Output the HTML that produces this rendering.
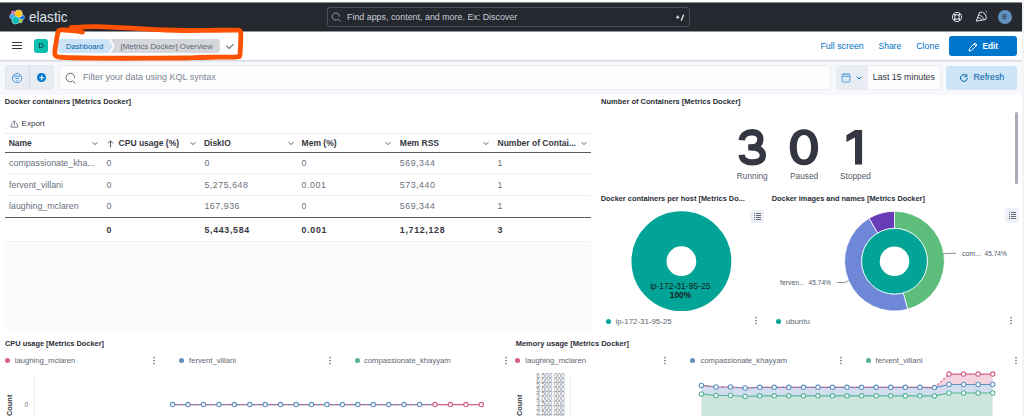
<!DOCTYPE html>
<html><head><meta charset="utf-8">
<style>
*{box-sizing:border-box;margin:0;padding:0}
html,body{width:1024px;height:416px;overflow:hidden;background:#fff;font-family:"Liberation Sans",sans-serif;color:#343741}
.a{position:absolute}
.t{position:absolute;white-space:nowrap;line-height:1}
.b{font-weight:700}
#hdr{left:0;top:3px;width:1022px;height:28px;background:#25282f;box-shadow:0 -1px 0 rgba(37,40,47,.55),0 1px 0 rgba(37,40,47,.5)}
#rstrip{left:1022px;top:0;width:2px;height:416px;background:#f3f3f3}
#bar2{left:0;top:31px;width:1022px;height:30px;background:#fff;border-bottom:1px solid #d3dae6}
#fbar{left:0;top:61px;width:1022px;height:34px;background:#f7f8fc;box-shadow:inset 0 2px 2px -1px rgba(0,0,0,.07)}
</style></head>
<body>
<div id="rstrip" class="a"></div>
<!-- dark header -->
<div id="bar2" class="a"></div>
<div id="hdr" class="a"></div>
<svg class="a" style="left:0;top:0" width="32" height="32" viewBox="0 0 32 32">
  <g stroke="#e8ebf0" stroke-width=".55">
  <circle cx="12.1" cy="16.5" r="2.4" fill="#1ba9f5"/>
  <circle cx="13.1" cy="12.6" r="1.7" fill="#f04e98"/>
  <circle cx="21.9" cy="17.3" r="2.5" fill="#0b64dd"/>
  <circle cx="18.6" cy="13.7" r="3.8" fill="#fec514"/>
  <circle cx="20.6" cy="21" r="1.8" fill="#93c90e"/>
  <circle cx="15.6" cy="20.2" r="3.8" fill="#00bfb3"/>
  </g>
</svg>
<div class="t" style="left:29.3px;top:9.4px;font-size:15px;color:#dfe5ef;transform:scaleX(.905);transform-origin:0 0">elastic</div>
<div class="a" style="left:327px;top:7px;width:363px;height:20px;border:1px solid #4b505b;border-radius:3px;background:#25282f"></div>
<svg class="a" style="left:331px;top:11.5px" width="11" height="11" viewBox="0 0 11 11"><path d="M6.6 7.6A3.6 3.6 0 1 1 8.4 4.6" fill="none" stroke="#a2abba" stroke-width=".9"/><path d="M6.9 6.9L9.3 9.4" stroke="#a2abba" stroke-width=".9"/></svg>
<div class="t" style="left:347px;top:12.5px;font-size:8.9px;color:#c9ced6">Find apps, content, and more. Ex: Discover</div>
<svg class="a" style="left:675px;top:14px" width="10" height="8" viewBox="0 0 10 8"><path d="M1.2 4L2.7 1.6L4.2 4Z" fill="#e8ebf0" stroke="#e8ebf0" stroke-width=".5"/><path d="M8.6 .8L6.2 6.8" stroke="#e8ebf0" stroke-width="1.3"/></svg>
<!-- header right icons -->
<svg class="a" style="left:951px;top:11px" width="12" height="12" viewBox="0 0 12 12"><circle cx="6" cy="6" r="4.6" fill="none" stroke="#dfe5ef" stroke-width="1"/><circle cx="6" cy="6" r="2.3" fill="none" stroke="#dfe5ef" stroke-width="1"/><path d="M2.8 2.8L4.4 4.4M9.2 2.8L7.6 4.4M2.8 9.2L4.4 7.6M9.2 9.2L7.6 7.6" stroke="#dfe5ef" stroke-width="1.6"/></svg>
<svg class="a" style="left:974px;top:9px" width="14" height="14" viewBox="0 0 14 14"><path d="M2.2 12.2L5.6 3.3A5.3 5.3 0 0 1 11.9 10.4Z" fill="none" stroke="#dfe5ef" stroke-width="1"/><path d="M3.6 8.6Q6.4 8.6 8.1 11.3M4.6 5.8Q8.6 6.4 10.2 10.8" fill="none" stroke="#dfe5ef" stroke-width=".9"/><path d="M11.6 1.6Q12.8 2.2 12.3 3.6" fill="none" stroke="#dfe5ef" stroke-width=".7"/></svg>
<div class="a" style="left:997.6px;top:9.5px;width:14.5px;height:14.5px;border-radius:50%;background:#6092c0"></div>
<div class="t" style="left:1002.2px;top:12.4px;font-size:8.6px;color:#25282f">e</div>

<!-- second bar -->
<div class="a" style="left:12px;top:41.8px;width:10px;height:1.1px;background:#343741"></div>
<div class="a" style="left:12px;top:45.1px;width:10px;height:1.1px;background:#343741"></div>
<div class="a" style="left:12px;top:48.3px;width:10px;height:1.1px;background:#343741"></div>
<div class="a" style="left:34px;top:38.5px;width:14px;height:14px;border-radius:3px;background:#0bbfae"></div>
<div class="t" style="left:38.6px;top:41.8px;font-size:7.6px;color:#1a1c21">D</div>
<svg class="a" style="left:58px;top:38.9px" width="164" height="14" viewBox="0 0 164 14">
  <path d="M3 0H50.5L55 7L50.5 14H3Q0 14 0 11V3Q0 0 3 0Z" fill="#cce4f5"/>
  <path d="M52.5 0H158.8Q161.8 0 161.8 3V11Q161.8 14 158.8 14H52.5L57 7Z" fill="#d5d7db"/>
</svg>
<div class="t" style="left:66px;top:42.7px;font-size:7.6px;color:#0061a6">Dashboard</div>
<div class="t" style="left:120.6px;top:42.6px;font-size:7.9px;color:#606673">[Metrics Docker] Overview</div>
<svg class="a" style="left:225px;top:42px" width="10" height="8" viewBox="0 0 10 8"><path d="M1.3 3.6L4.2 6.5L8.6 2.2" fill="none" stroke="#69707d" stroke-width="1.1"/></svg>
<div class="t" style="left:820.4px;top:41.6px;font-size:8.9px;color:#0071c2">Full screen</div>
<div class="t" style="left:878.5px;top:41.6px;font-size:8.5px;color:#0071c2">Share</div>
<div class="t" style="left:916.2px;top:41.6px;font-size:8.9px;color:#0071c2">Clone</div>
<div class="a" style="left:949px;top:36.2px;width:68px;height:19.5px;border-radius:3px;background:#0077cc"></div>
<svg class="a" style="left:968px;top:41.5px" width="10" height="10" viewBox="0 0 10 10"><path d="M1 9L1.6 6.4L7 1L9 3L3.6 8.4Z" fill="none" stroke="#fff" stroke-width="1"/><path d="M6 2L8 4" stroke="#fff" stroke-width="1"/></svg>
<div class="t b" style="left:982.4px;top:41.6px;font-size:8.3px;color:#fff">Edit</div>

<!-- filter bar -->
<div id="fbar" class="a"></div>

<div class="a" style="left:5px;top:65px;width:48.5px;height:25px;border-radius:3px;background:#e9edf3;border:1px solid #e3e8f2"></div>
<div class="a" style="left:29.3px;top:65.5px;width:1px;height:24px;background:#d3dae6"></div>
<svg class="a" style="left:11px;top:71.5px" width="12" height="12" viewBox="0 0 12 12"><circle cx="6.1" cy="6.1" r="4.6" fill="none" stroke="#2f87d3" stroke-width=".85"/><path d="M2.8 4.2H9.4M4.3 6.5H7.9M5.4 8.7H6.8" stroke="#2f87d3" stroke-width=".9"/></svg>
<div class="a" style="left:36.9px;top:73px;width:9.4px;height:9.4px;border-radius:50%;background:#0077cc"></div>
<svg class="a" style="left:36.9px;top:73px" width="9.4" height="9.4" viewBox="0 0 10 10"><path d="M5 2.4V7.6M2.4 5H7.6" stroke="#fff" stroke-width="1.2"/></svg>
<div class="a" style="left:58.7px;top:65.2px;width:772px;height:24.4px;border-radius:3px;background:#fdfdfe;border:1px solid #e9ecf2"></div>
<svg class="a" style="left:64px;top:71.7px" width="13" height="13" viewBox="0 0 13 13"><path d="M8.3 9.3A4.3 4.3 0 1 1 10.5 6.2" fill="none" stroke="#535966" stroke-width=".9"/><path d="M8.6 8.6L11.2 11.4" stroke="#535966" stroke-width=".9"/></svg>
<div class="t" style="left:83px;top:73px;font-size:9px;color:#7d8492">Filter your data using KQL syntax</div>
<div class="a" style="left:836.3px;top:65.3px;width:105px;height:24.3px;border-radius:3px;background:#fdfdfe;border:1px solid #e9ecf2"></div>
<div class="a" style="left:836.8px;top:65.8px;width:31px;height:23.3px;border-radius:3px 0 0 3px;background:#e9edf3"></div>
<svg class="a" style="left:841px;top:72px" width="10" height="11" viewBox="0 0 10 11"><rect x="1" y="2" width="8" height="8" rx="1" fill="#dbe7f3" stroke="#3d8fd6" stroke-width=".8"/><path d="M1 4.3H9M3 1V3M7 1V3" stroke="#3d8fd6" stroke-width=".8"/></svg>
<svg class="a" style="left:855.5px;top:75.5px" width="6" height="4" viewBox="0 0 6 4"><path d="M.7 .8L3 3L5.3 .8" fill="none" stroke="#0077cc" stroke-width="1"/></svg>
<div class="t" style="left:872.8px;top:72.8px;font-size:8.8px;color:#343741">Last 15 minutes</div>
<div class="a" style="left:946px;top:65.8px;width:71px;height:23.8px;border-radius:3px;background:#cce4f5"></div>
<svg class="a" style="left:958.5px;top:72.5px" width="10" height="10" viewBox="0 0 10 10"><path d="M8.3 5A3.4 3.4 0 1 1 6.9 2.2" fill="none" stroke="#0061a6" stroke-width="1"/><path d="M5.3 2.2H7.8V-.3" fill="none" stroke="#0061a6" stroke-width="1" transform="translate(0 1.5)"/></svg>
<div class="t" style="left:973.4px;top:73px;font-size:8.8px;color:#0061a6">Refresh</div>


<!-- table panel -->
<div class="a" style="left:5px;top:241px;width:585.5px;height:91px;background:#fafbfd"></div>
<div class="t b" style="left:4.8px;top:98px;font-size:7.5px;color:#2b2e36">Docker containers [Metrics Docker]</div>
<svg class="a" style="left:9.5px;top:119.5px" width="9" height="8" viewBox="0 0 9 8"><path d="M3 2.6Q1 3.9 1 5.6V7.1H7.6V5.6Q7.6 3.9 5.6 2.6" fill="none" stroke="#69707d" stroke-width=".9"/><path d="M4.3 5.6V.8M3.2 1.9L4.3 .8L5.4 1.9" fill="none" stroke="#69707d" stroke-width=".9"/></svg>
<div class="t" style="left:21.6px;top:119.6px;font-size:8px;color:#343741">Export</div>
<div class="a" style="left:5px;top:133px;width:585.5px;height:1px;background:#e9edf3"></div>
<div class="a" style="left:5px;top:151.6px;width:585.5px;height:1.6px;background:#535966"></div>
<div class="a" style="left:5px;top:173.2px;width:585.5px;height:1px;background:#eef1f6"></div>
<div class="a" style="left:5px;top:195.2px;width:585.5px;height:1px;background:#eef1f6"></div>
<div class="a" style="left:5px;top:216.8px;width:585.5px;height:1.6px;background:#535966"></div>
<div class="a" style="left:5px;top:240.6px;width:585.5px;height:1px;background:#eef1f6"></div>
<div class="t b" style="left:8.7px;top:139px;font-size:8.5px;color:#343741">Name</div>
<svg class="a" style="left:92.2px;top:140.5px" width="6" height="5" viewBox="0 0 6 5"><path d="M.6 1.2L3 3.6L5.4 1.2" fill="none" stroke="#454a55" stroke-width=".9"/></svg>
<div class="t b" style="left:118.6px;top:139px;font-size:8.5px;color:#343741">CPU usage (%)</div>
<svg class="a" style="left:190.3px;top:140.5px" width="6" height="5" viewBox="0 0 6 5"><path d="M.6 1.2L3 3.6L5.4 1.2" fill="none" stroke="#454a55" stroke-width=".9"/></svg>
<div class="t b" style="left:203.9px;top:139px;font-size:8.5px;color:#343741">DiskIO</div>
<svg class="a" style="left:287.6px;top:140.5px" width="6" height="5" viewBox="0 0 6 5"><path d="M.6 1.2L3 3.6L5.4 1.2" fill="none" stroke="#454a55" stroke-width=".9"/></svg>
<div class="t b" style="left:301.6px;top:139px;font-size:8.5px;color:#343741">Mem (%)</div>
<svg class="a" style="left:385.2px;top:140.5px" width="6" height="5" viewBox="0 0 6 5"><path d="M.6 1.2L3 3.6L5.4 1.2" fill="none" stroke="#454a55" stroke-width=".9"/></svg>
<div class="t b" style="left:399.8px;top:139px;font-size:8.5px;color:#343741">Mem RSS</div>
<svg class="a" style="left:483.1px;top:140.5px" width="6" height="5" viewBox="0 0 6 5"><path d="M.6 1.2L3 3.6L5.4 1.2" fill="none" stroke="#454a55" stroke-width=".9"/></svg>
<div class="t b" style="left:497.5px;top:139px;font-size:8.5px;color:#343741">Number of Contai...</div>
<svg class="a" style="left:580.7px;top:140.5px" width="6" height="5" viewBox="0 0 6 5"><path d="M.6 1.2L3 3.6L5.4 1.2" fill="none" stroke="#454a55" stroke-width=".9"/></svg>
<svg class="a" style="left:107px;top:139.5px" width="7" height="8" viewBox="0 0 7 8"><path d="M3.5 7.3V1M1 3.3L3.5 .8L6 3.3" fill="none" stroke="#343741" stroke-width=".85"/></svg>
<div class="t" style="left:9.1px;top:159px;font-size:8.8px;color:#69707d;">compassionate_kha...</div>
<div class="t" style="left:106.6px;top:159px;font-size:8.8px;color:#69707d;letter-spacing:.55px;">0</div>
<div class="t" style="left:204.4px;top:159px;font-size:8.8px;color:#69707d;letter-spacing:.55px;">0</div>
<div class="t" style="left:301.6px;top:159px;font-size:8.8px;color:#69707d;letter-spacing:.55px;">0</div>
<div class="t" style="left:399.8px;top:159px;font-size:8.8px;color:#69707d;letter-spacing:.55px;">569,344</div>
<div class="t" style="left:497.5px;top:159px;font-size:8.8px;color:#69707d;letter-spacing:.55px;">1</div>
<div class="t" style="left:9.1px;top:181px;font-size:8.8px;color:#69707d;">fervent_villani</div>
<div class="t" style="left:106.6px;top:181px;font-size:8.8px;color:#69707d;letter-spacing:.55px;">0</div>
<div class="t" style="left:204.4px;top:181px;font-size:8.8px;color:#69707d;letter-spacing:.55px;">5,275,648</div>
<div class="t" style="left:301.6px;top:181px;font-size:8.8px;color:#69707d;letter-spacing:.55px;">0.001</div>
<div class="t" style="left:399.8px;top:181px;font-size:8.8px;color:#69707d;letter-spacing:.55px;">573,440</div>
<div class="t" style="left:497.5px;top:181px;font-size:8.8px;color:#69707d;letter-spacing:.55px;">1</div>
<div class="t" style="left:9.1px;top:202.4px;font-size:8.8px;color:#69707d;">laughing_mclaren</div>
<div class="t" style="left:106.6px;top:202.4px;font-size:8.8px;color:#69707d;letter-spacing:.55px;">0</div>
<div class="t" style="left:204.4px;top:202.4px;font-size:8.8px;color:#69707d;letter-spacing:.55px;">167,936</div>
<div class="t" style="left:301.6px;top:202.4px;font-size:8.8px;color:#69707d;letter-spacing:.55px;">0</div>
<div class="t" style="left:399.8px;top:202.4px;font-size:8.8px;color:#69707d;letter-spacing:.55px;">569,344</div>
<div class="t" style="left:497.5px;top:202.4px;font-size:8.8px;color:#69707d;letter-spacing:.55px;">1</div>
<div class="t b" style="left:106.6px;top:225.6px;font-size:8.8px;color:#343741;letter-spacing:.7px">0</div>
<div class="t b" style="left:204.4px;top:225.6px;font-size:8.8px;color:#343741;letter-spacing:.7px">5,443,584</div>
<div class="t b" style="left:301.6px;top:225.6px;font-size:8.8px;color:#343741;letter-spacing:.7px">0.001</div>
<div class="t b" style="left:399.8px;top:225.6px;font-size:8.8px;color:#343741;letter-spacing:.7px">1,712,128</div>
<div class="t b" style="left:497.5px;top:225.6px;font-size:8.8px;color:#343741;letter-spacing:.7px">3</div>

<!-- number of containers -->
<div class="t b" style="left:601px;top:98.3px;font-size:7.5px;color:#2b2e36">Number of Containers [Metrics Docker]</div>



<svg class="a" style="left:0;top:0" width="1024" height="416">
<g transform="translate(738.5 129.1)" fill="none" stroke="#343741" stroke-width="6.3">
<path d="M3.3 11.2C3.7 6 8 3.15 13.6 3.15C19.3 3.15 21.9 6.3 21.9 9.9C21.9 14.8 18.5 18.35 13 18.35H9.7"/>
<path d="M12.5 18.35C20 18.35 24.35 21.5 24.35 26.3C24.35 30.8 20.3 33.25 13.7 33.25C7.5 33.25 3.5 30.5 3.15 25.6"/>
</g>
<path fill-rule="evenodd" fill="#343741" d="M803.95 129.20C812.75 129.20 818.15 136.04 818.15 147.20C818.15 158.36 812.75 165.20 803.95 165.20C795.15 165.20 789.75 158.36 789.75 147.20C789.75 136.04 795.15 129.20 803.95 129.20ZM803.95 134.90C808.35 134.90 811.05 139.57 811.05 147.20C811.05 154.83 808.35 159.50 803.95 159.50C799.55 159.50 796.85 154.83 796.85 147.20C796.85 139.57 799.55 134.90 803.95 134.90Z"/>
<path fill="#343741" d="M855 129.9H862.1V164.6H855V137.6L846.4 141.9V135.3Z"/>
</svg>
<div class="t" style="left:736.8px;top:171.5px;font-size:8.3px;color:#535966">Running</div>
<div class="t" style="left:790px;top:171.5px;font-size:8.3px;color:#535966">Paused</div>
<div class="t" style="left:840px;top:171.5px;font-size:8.3px;color:#535966">Stopped</div>
<div class="a" style="left:1014.7px;top:112.4px;width:3px;height:71.5px;border-radius:2px;background:#a7adb7"></div>

<!-- pie 1 -->
<div class="t b" style="left:600.7px;top:195.3px;font-size:7.4px;color:#2b2e36">Docker containers per host [Metrics Do...</div>
<div class="a" style="left:750px;top:209.5px;width:14px;height:13.5px;border-radius:3px;background:#eef2f8"></div>
<svg class="a" style="left:752.5px;top:212px" width="9" height="9" viewBox="0 0 9 9"><path d="M1 1.5H2M3 1.5H8M1 3.5H2M3 3.5H8M1 5.5H2M3 5.5H8M1 7.5H2M3 7.5H8" stroke="#535966" stroke-width=".9"/></svg>
<svg class="a" style="left:631px;top:210.5px" width="101" height="101" viewBox="0 0 101 101">
  <circle cx="50.4" cy="50.2" r="32.4" fill="none" stroke="#02a497" stroke-width="35"/>
</svg>
<div class="t" style="left:649.9px;top:281.5px;font-size:8.5px;color:#1a1c21">ip-172-31-95-25</div>
<div class="t b" style="left:669.8px;top:291.3px;font-size:8.4px;color:#1a1c21">100%</div>
<div class="a" style="left:606.3px;top:318.9px;width:5px;height:5px;border-radius:50%;background:#02a497"></div>
<div class="t" style="left:615.5px;top:317.9px;font-size:7.9px;color:#606673">ip-172-31-95-25</div>
<svg class="a" style="left:754px;top:316px" width="4" height="10" viewBox="0 0 4 10"><circle cx="2" cy="1.5" r=".85" fill="#69707d"/><circle cx="2" cy="4.5" r=".85" fill="#69707d"/><circle cx="2" cy="7.5" r=".85" fill="#69707d"/></svg>

<!-- pie 2 -->
<div class="t b" style="left:771.7px;top:195.3px;font-size:7.4px;color:#2b2e36">Docker images and names [Metrics Docker]</div>
<div class="a" style="left:1005px;top:208.3px;width:14.2px;height:14.4px;border-radius:3px;background:#eef2f8"></div>
<svg class="a" style="left:1007.5px;top:211px" width="9" height="9" viewBox="0 0 9 9"><path d="M1 1.5H2M3 1.5H8M1 3.5H2M3 3.5H8M1 5.5H2M3 5.5H8M1 7.5H2M3 7.5H8" stroke="#535966" stroke-width=".9"/></svg>
<svg class="a" style="left:844px;top:210.5px" width="101" height="101" viewBox="0 0 101 101" id="donut2"><path d="M50.50 0.30A49.90 49.90 0 0 1 63.70 98.32L59.18 81.83A32.80 32.80 0 0 0 50.50 17.40Z" fill="#5cbe7a" stroke="#fff" stroke-width=".8"/><path d="M63.70 98.32A49.90 49.90 0 0 1 25.04 7.28L33.76 21.99A32.80 32.80 0 0 0 59.18 81.83Z" fill="#6e87d7" stroke="#fff" stroke-width=".8"/><path d="M25.04 7.28A49.90 49.90 0 0 1 50.50 0.30L50.50 17.40A32.80 32.80 0 0 0 33.76 21.99Z" fill="#673cb4" stroke="#fff" stroke-width=".8"/><circle cx="50.5" cy="50.2" r="23.8" fill="none" stroke="#02a497" stroke-width="18"/><circle cx="50.5" cy="50.2" r="32.9" fill="none" stroke="#fff" stroke-width=".8"/></svg>
<div class="t" style="left:780.1px;top:279.8px;font-size:6.8px;color:#535966">ferven...</div>
<div class="t" style="left:808.6px;top:280px;font-size:6.6px;color:#535966">45.74%</div>
<svg class="a" style="left:836px;top:276px" width="14" height="8" viewBox="0 0 14 8"><path d="M1 6.5H8.5Q10 6.5 12.5 4.5" fill="none" stroke="#69707d" stroke-width=".8"/></svg>
<svg class="a" style="left:942px;top:251px" width="15" height="5" viewBox="0 0 15 5"><path d="M1 3Q3 2.4 14 2.3" fill="none" stroke="#69707d" stroke-width=".8"/></svg>
<div class="t" style="left:961.9px;top:250px;font-size:7px;color:#535966">com...</div>
<div class="t" style="left:984.5px;top:250.5px;font-size:6.6px;color:#535966">45.74%</div>
<div class="a" style="left:775.5px;top:318.9px;width:5px;height:5px;border-radius:50%;background:#02a497"></div>
<div class="t" style="left:785.7px;top:317.9px;font-size:7.9px;color:#606673">ubuntu</div>
<svg class="a" style="left:1008.5px;top:316px" width="4" height="10" viewBox="0 0 4 10"><circle cx="2" cy="1.5" r=".85" fill="#69707d"/><circle cx="2" cy="4.5" r=".85" fill="#69707d"/><circle cx="2" cy="7.5" r=".85" fill="#69707d"/></svg>

<!-- CPU chart -->
<div class="t b" style="left:5px;top:340px;font-size:7.4px;color:#2b2e36">CPU usage [Metrics Docker]</div>
<div class="a" style="left:5.1px;top:358.2px;width:5px;height:5px;border-radius:50%;background:#d36086"></div>
<div class="t" style="left:14.7px;top:357px;font-size:7.7px;color:#606673">laughing_mclaren</div>
<svg class="a" style="left:152.3px;top:356px" width="4" height="10" viewBox="0 0 4 10"><circle cx="2" cy="1.5" r=".85" fill="#69707d"/><circle cx="2" cy="4.5" r=".85" fill="#69707d"/><circle cx="2" cy="7.5" r=".85" fill="#69707d"/></svg>
<div class="a" style="left:179.2px;top:358.2px;width:5px;height:5px;border-radius:50%;background:#6092c0"></div>
<div class="t" style="left:189px;top:357px;font-size:7.7px;color:#606673">fervent_villani</div>
<svg class="a" style="left:327.5px;top:356px" width="4" height="10" viewBox="0 0 4 10"><circle cx="2" cy="1.5" r=".85" fill="#69707d"/><circle cx="2" cy="4.5" r=".85" fill="#69707d"/><circle cx="2" cy="7.5" r=".85" fill="#69707d"/></svg>
<div class="a" style="left:354.5px;top:358.2px;width:5px;height:5px;border-radius:50%;background:#54b399"></div>
<div class="t" style="left:364px;top:357px;font-size:7.7px;color:#606673">compassionate_khayyam</div>
<svg class="a" style="left:503.5px;top:356px" width="4" height="10" viewBox="0 0 4 10"><circle cx="2" cy="1.5" r=".85" fill="#69707d"/><circle cx="2" cy="4.5" r=".85" fill="#69707d"/><circle cx="2" cy="7.5" r=".85" fill="#69707d"/></svg>
<div class="a" style="left:34px;top:374.4px;width:1px;height:42px;background:#eef0f3"></div>
<div class="t b" style="left:6px;top:416px;font-size:7.4px;color:#343741;transform:rotate(-90deg);transform-origin:0 0">Count</div>
<div class="t" style="left:24.6px;top:401.5px;font-size:6.5px;color:#69707d">0</div>
<svg class="a" style="left:0;top:0" width="1024" height="416" id="cpu"><path d="M172.6 404.6H481.3" stroke="#d36086" stroke-width="1.1"/><path d="M172.6 404.6H435.0" stroke="#6092c0" stroke-width="1.1" stroke-dasharray="2.5 2.5"/><circle cx="172.6" cy="404.6" r="2.2" fill="#fff" stroke="#6092c0" stroke-width="1.1"/><circle cx="188.0" cy="404.6" r="2.2" fill="#fff" stroke="#6092c0" stroke-width="1.1"/><circle cx="203.5" cy="404.6" r="2.2" fill="#fff" stroke="#6092c0" stroke-width="1.1"/><circle cx="218.9" cy="404.6" r="2.2" fill="#fff" stroke="#6092c0" stroke-width="1.1"/><circle cx="234.3" cy="404.6" r="2.2" fill="#fff" stroke="#6092c0" stroke-width="1.1"/><circle cx="249.8" cy="404.6" r="2.2" fill="#fff" stroke="#6092c0" stroke-width="1.1"/><circle cx="265.2" cy="404.6" r="2.2" fill="#fff" stroke="#6092c0" stroke-width="1.1"/><circle cx="280.6" cy="404.6" r="2.2" fill="#fff" stroke="#6092c0" stroke-width="1.1"/><circle cx="296.1" cy="404.6" r="2.2" fill="#fff" stroke="#6092c0" stroke-width="1.1"/><circle cx="311.5" cy="404.6" r="2.2" fill="#fff" stroke="#6092c0" stroke-width="1.1"/><circle cx="326.9" cy="404.6" r="2.2" fill="#fff" stroke="#6092c0" stroke-width="1.1"/><circle cx="342.4" cy="404.6" r="2.2" fill="#fff" stroke="#6092c0" stroke-width="1.1"/><circle cx="357.8" cy="404.6" r="2.2" fill="#fff" stroke="#6092c0" stroke-width="1.1"/><circle cx="373.3" cy="404.6" r="2.2" fill="#fff" stroke="#6092c0" stroke-width="1.1"/><circle cx="388.7" cy="404.6" r="2.2" fill="#fff" stroke="#6092c0" stroke-width="1.1"/><circle cx="404.1" cy="404.6" r="2.2" fill="#fff" stroke="#6092c0" stroke-width="1.1"/><circle cx="419.6" cy="404.6" r="2.2" fill="#fff" stroke="#6092c0" stroke-width="1.1"/><circle cx="435.0" cy="404.6" r="2.2" fill="#fff" stroke="#d36086" stroke-width="1.1"/><circle cx="450.4" cy="404.6" r="2.2" fill="#fff" stroke="#d36086" stroke-width="1.1"/><circle cx="465.9" cy="404.6" r="2.2" fill="#fff" stroke="#d36086" stroke-width="1.1"/><circle cx="481.3" cy="404.6" r="2.2" fill="#fff" stroke="#d36086" stroke-width="1.1"/></svg>

<!-- Memory chart -->
<div class="t b" style="left:515.7px;top:340px;font-size:7.5px;color:#2b2e36">Memory usage [Metrics Docker]</div>
<div class="a" style="left:515.2px;top:358.2px;width:5px;height:5px;border-radius:50%;background:#d36086"></div>
<div class="t" style="left:525.3px;top:357px;font-size:7.7px;color:#606673">laughing_mclaren</div>
<svg class="a" style="left:663.4px;top:356px" width="4" height="10" viewBox="0 0 4 10"><circle cx="2" cy="1.5" r=".85" fill="#69707d"/><circle cx="2" cy="4.5" r=".85" fill="#69707d"/><circle cx="2" cy="7.5" r=".85" fill="#69707d"/></svg>
<div class="a" style="left:690.3px;top:358.2px;width:5px;height:5px;border-radius:50%;background:#6092c0"></div>
<div class="t" style="left:700.4px;top:357px;font-size:7.7px;color:#606673">compassionate_khayyam</div>
<svg class="a" style="left:838.5px;top:356px" width="4" height="10" viewBox="0 0 4 10"><circle cx="2" cy="1.5" r=".85" fill="#69707d"/><circle cx="2" cy="4.5" r=".85" fill="#69707d"/><circle cx="2" cy="7.5" r=".85" fill="#69707d"/></svg>
<div class="a" style="left:865.5px;top:358.2px;width:5px;height:5px;border-radius:50%;background:#54b399"></div>
<div class="t" style="left:875.5px;top:357px;font-size:7.7px;color:#606673">fervent_villani</div>
<svg class="a" style="left:1013.5px;top:356px" width="4" height="10" viewBox="0 0 4 10"><circle cx="2" cy="1.5" r=".85" fill="#69707d"/><circle cx="2" cy="4.5" r=".85" fill="#69707d"/><circle cx="2" cy="7.5" r=".85" fill="#69707d"/></svg>
<div class="a" style="left:569.6px;top:374.4px;width:1px;height:42px;background:#eef0f3"></div>
<div class="t b" style="left:516.3px;top:416px;font-size:7.4px;color:#343741;transform:rotate(-90deg);transform-origin:0 0">Count</div>
<svg class="a" style="left:0;top:0" width="1024" height="416"><g font-family="Liberation Sans" font-size="6.4" fill="#7f8794" text-anchor="end"><text x="564.6" y="378.00">6,500,000</text><text x="564.6" y="382.60">6,000,000</text><text x="564.6" y="387.20">5,500,000</text><text x="564.6" y="391.80">5,000,000</text><text x="564.6" y="396.40">4,500,000</text><text x="564.6" y="401.00">4,000,000</text><text x="564.6" y="405.60">3,500,000</text><text x="564.6" y="410.20">3,000,000</text><text x="564.6" y="414.80">2,500,000</text><text x="564.6" y="419.40">2,000,000</text></g></svg>
<svg class="a" style="left:0;top:0" width="1024" height="416" id="mem"><polygon points="701.4,393.9 716.0,395.5 730.5,395.5 745.1,396.5 759.7,395.8 774.2,395.8 788.8,395.8 803.4,395.8 817.9,395.8 832.5,395.8 847.0,395.8 861.6,395.8 876.2,395.8 890.7,395.8 905.3,395.8 919.9,395.8 934.4,395.9 949.0,393.0 963.6,393.0 978.1,393.0 992.7,393.0 992.7,416 701.4,416" fill="#cde6dd"/><polygon points="701.4,385.4 716.0,387.0 730.5,387.0 745.1,388.0 759.7,387.3 774.2,387.3 788.8,387.3 803.4,387.3 817.9,387.3 832.5,387.3 847.0,387.3 861.6,387.3 876.2,387.3 890.7,387.3 905.3,387.3 919.9,387.3 934.4,387.6 949.0,384.5 963.6,384.5 978.1,384.5 992.7,384.5 992.7,393.0 978.1,393.0 963.6,393.0 949.0,393.0 934.4,395.9 919.9,395.8 905.3,395.8 890.7,395.8 876.2,395.8 861.6,395.8 847.0,395.8 832.5,395.8 817.9,395.8 803.4,395.8 788.8,395.8 774.2,395.8 759.7,395.8 745.1,396.5 730.5,395.5 716.0,395.5 701.4,393.9" fill="#d2def0"/><polygon points="934.4,387.6 949.0,374.1 963.6,374.1 978.1,374.1 992.7,374.1 992.7,384.5 978.1,384.5 963.6,384.5 949.0,384.5 934.4,387.6" fill="#f2d3df"/><polyline points="701.4,393.9 716.0,395.5 730.5,395.5 745.1,396.5 759.7,395.8 774.2,395.8 788.8,395.8 803.4,395.8 817.9,395.8 832.5,395.8 847.0,395.8 861.6,395.8 876.2,395.8 890.7,395.8 905.3,395.8 919.9,395.8 934.4,395.9 949.0,393.0 963.6,393.0 978.1,393.0 992.7,393.0" fill="none" stroke="#54b399" stroke-width="1.2"/><polyline points="701.4,385.4 716.0,387.0 730.5,387.0 745.1,388.0 759.7,387.3 774.2,387.3 788.8,387.3 803.4,387.3 817.9,387.3 832.5,387.3 847.0,387.3 861.6,387.3 876.2,387.3 890.7,387.3 905.3,387.3 919.9,387.3 934.4,387.6" fill="none" stroke="#d36086" stroke-width="1.2"/><polyline points="949.0,374.1 963.6,374.1 978.1,374.1 992.7,374.1" fill="none" stroke="#d36086" stroke-width="1.2"/><path d="M934.4 387.6L949.0 374.1" stroke="#d36086" stroke-width="1.2" stroke-dasharray="2 2"/><polyline points="701.4,385.4 716.0,387.0 730.5,387.0 745.1,388.0 759.7,387.3 774.2,387.3 788.8,387.3 803.4,387.3 817.9,387.3 832.5,387.3 847.0,387.3 861.6,387.3 876.2,387.3 890.7,387.3 905.3,387.3 919.9,387.3 934.4,387.6" fill="none" stroke="#6092c0" stroke-width="1.2" stroke-dasharray="2.5 2.5"/><polyline points="934.4,387.6 949.0,384.5 963.6,384.5 978.1,384.5 992.7,384.5" fill="none" stroke="#6092c0" stroke-width="1.2"/><circle cx="701.4" cy="393.9" r="2.2" fill="#fff" stroke="#54b399" stroke-width="1.1"/><circle cx="701.4" cy="385.4" r="2.2" fill="#fff" stroke="#6092c0" stroke-width="1.1"/><circle cx="716.0" cy="395.5" r="2.2" fill="#fff" stroke="#54b399" stroke-width="1.1"/><circle cx="716.0" cy="387.0" r="2.2" fill="#fff" stroke="#6092c0" stroke-width="1.1"/><circle cx="730.5" cy="395.5" r="2.2" fill="#fff" stroke="#54b399" stroke-width="1.1"/><circle cx="730.5" cy="387.0" r="2.2" fill="#fff" stroke="#6092c0" stroke-width="1.1"/><circle cx="745.1" cy="396.5" r="2.2" fill="#fff" stroke="#54b399" stroke-width="1.1"/><circle cx="745.1" cy="388.0" r="2.2" fill="#fff" stroke="#6092c0" stroke-width="1.1"/><circle cx="759.7" cy="395.8" r="2.2" fill="#fff" stroke="#54b399" stroke-width="1.1"/><circle cx="759.7" cy="387.3" r="2.2" fill="#fff" stroke="#6092c0" stroke-width="1.1"/><circle cx="774.2" cy="395.8" r="2.2" fill="#fff" stroke="#54b399" stroke-width="1.1"/><circle cx="774.2" cy="387.3" r="2.2" fill="#fff" stroke="#6092c0" stroke-width="1.1"/><circle cx="788.8" cy="395.8" r="2.2" fill="#fff" stroke="#54b399" stroke-width="1.1"/><circle cx="788.8" cy="387.3" r="2.2" fill="#fff" stroke="#6092c0" stroke-width="1.1"/><circle cx="803.4" cy="395.8" r="2.2" fill="#fff" stroke="#54b399" stroke-width="1.1"/><circle cx="803.4" cy="387.3" r="2.2" fill="#fff" stroke="#6092c0" stroke-width="1.1"/><circle cx="817.9" cy="395.8" r="2.2" fill="#fff" stroke="#54b399" stroke-width="1.1"/><circle cx="817.9" cy="387.3" r="2.2" fill="#fff" stroke="#6092c0" stroke-width="1.1"/><circle cx="832.5" cy="395.8" r="2.2" fill="#fff" stroke="#54b399" stroke-width="1.1"/><circle cx="832.5" cy="387.3" r="2.2" fill="#fff" stroke="#6092c0" stroke-width="1.1"/><circle cx="847.0" cy="395.8" r="2.2" fill="#fff" stroke="#54b399" stroke-width="1.1"/><circle cx="847.0" cy="387.3" r="2.2" fill="#fff" stroke="#6092c0" stroke-width="1.1"/><circle cx="861.6" cy="395.8" r="2.2" fill="#fff" stroke="#54b399" stroke-width="1.1"/><circle cx="861.6" cy="387.3" r="2.2" fill="#fff" stroke="#6092c0" stroke-width="1.1"/><circle cx="876.2" cy="395.8" r="2.2" fill="#fff" stroke="#54b399" stroke-width="1.1"/><circle cx="876.2" cy="387.3" r="2.2" fill="#fff" stroke="#6092c0" stroke-width="1.1"/><circle cx="890.7" cy="395.8" r="2.2" fill="#fff" stroke="#54b399" stroke-width="1.1"/><circle cx="890.7" cy="387.3" r="2.2" fill="#fff" stroke="#6092c0" stroke-width="1.1"/><circle cx="905.3" cy="395.8" r="2.2" fill="#fff" stroke="#54b399" stroke-width="1.1"/><circle cx="905.3" cy="387.3" r="2.2" fill="#fff" stroke="#6092c0" stroke-width="1.1"/><circle cx="919.9" cy="395.8" r="2.2" fill="#fff" stroke="#54b399" stroke-width="1.1"/><circle cx="919.9" cy="387.3" r="2.2" fill="#fff" stroke="#6092c0" stroke-width="1.1"/><circle cx="934.4" cy="395.9" r="2.2" fill="#fff" stroke="#54b399" stroke-width="1.1"/><circle cx="934.4" cy="387.6" r="2.2" fill="#fff" stroke="#6092c0" stroke-width="1.1"/><circle cx="949.0" cy="393.0" r="2.2" fill="#fff" stroke="#54b399" stroke-width="1.1"/><circle cx="949.0" cy="384.5" r="2.2" fill="#fff" stroke="#6092c0" stroke-width="1.1"/><circle cx="949.0" cy="374.1" r="2.2" fill="#fff" stroke="#d36086" stroke-width="1.1"/><circle cx="963.6" cy="393.0" r="2.2" fill="#fff" stroke="#54b399" stroke-width="1.1"/><circle cx="963.6" cy="384.5" r="2.2" fill="#fff" stroke="#6092c0" stroke-width="1.1"/><circle cx="963.6" cy="374.1" r="2.2" fill="#fff" stroke="#d36086" stroke-width="1.1"/><circle cx="978.1" cy="393.0" r="2.2" fill="#fff" stroke="#54b399" stroke-width="1.1"/><circle cx="978.1" cy="384.5" r="2.2" fill="#fff" stroke="#6092c0" stroke-width="1.1"/><circle cx="978.1" cy="374.1" r="2.2" fill="#fff" stroke="#d36086" stroke-width="1.1"/><circle cx="992.7" cy="393.0" r="2.2" fill="#fff" stroke="#54b399" stroke-width="1.1"/><circle cx="992.7" cy="384.5" r="2.2" fill="#fff" stroke="#6092c0" stroke-width="1.1"/><circle cx="992.7" cy="374.1" r="2.2" fill="#fff" stroke="#d36086" stroke-width="1.1"/></svg>
<!-- annotation -->
<svg class="a" style="left:0;top:0" width="1024" height="416"><path d="M71.00 27.60C73.17 27.47 79.67 26.97 84.00 26.80C88.33 26.63 91.83 26.52 97.00 26.60C102.17 26.68 107.83 26.95 115.00 27.30C122.17 27.65 131.67 28.25 140.00 28.70C148.33 29.15 157.50 29.70 165.00 30.00C172.50 30.30 177.50 30.45 185.00 30.50C192.50 30.55 202.17 30.37 210.00 30.30C217.83 30.23 227.25 30.12 232.00 30.10C236.75 30.08 237.07 29.88 238.50 30.20C239.93 30.52 240.22 31.03 240.60 32.00C240.98 32.97 240.80 34.00 240.80 36.00C240.80 38.00 240.70 41.33 240.60 44.00C240.50 46.67 240.33 50.13 240.20 52.00C240.07 53.87 240.25 54.38 239.80 55.20C239.35 56.02 240.80 56.58 237.50 56.90C234.20 57.22 226.25 57.00 220.00 57.10C213.75 57.20 205.83 57.35 200.00 57.50C194.17 57.65 195.00 57.88 185.00 58.00C175.00 58.12 155.00 58.17 140.00 58.20C125.00 58.23 106.67 58.28 95.00 58.20C83.33 58.12 75.83 57.87 70.00 57.70C64.17 57.53 62.40 57.52 60.00 57.20C57.60 56.88 56.47 56.75 55.60 55.80C54.73 54.85 54.70 53.80 54.80 51.50C54.90 49.20 55.73 44.92 56.20 42.00C56.67 39.08 57.10 35.93 57.60 34.00C58.10 32.07 58.13 31.07 59.20 30.40C60.27 29.73 61.37 29.92 64.00 30.00C66.63 30.08 71.92 30.55 75.00 30.90C78.08 31.25 81.25 31.90 82.50 32.10" fill="none" stroke="#ff5200" stroke-width="4.8" stroke-linecap="round" stroke-linejoin="round"/></svg>
</body></html>
